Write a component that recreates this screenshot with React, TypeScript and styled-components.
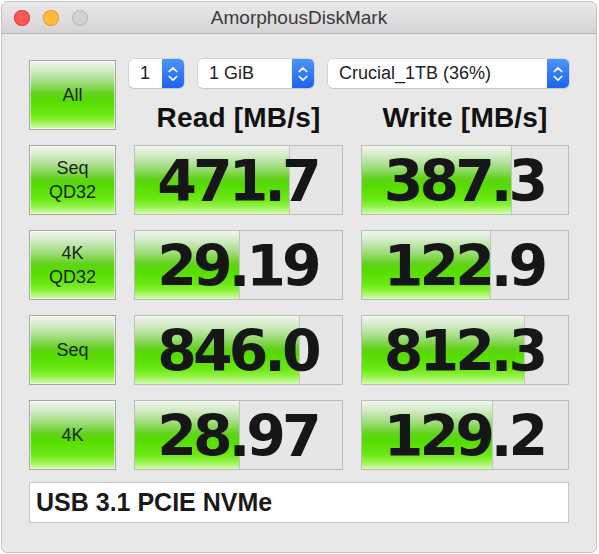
import React from 'react';
import styled, { createGlobalStyle } from 'styled-components';

const GlobalStyle = createGlobalStyle`
  html, body {
    margin: 0;
    padding: 0;
    background: #ffffff;
  }
  body {
    font-family: "Liberation Sans", Arial, sans-serif;
  }
`;

const green = `linear-gradient(to bottom,
  #f1f6ef 0%,
  #d2ebc6 14%,
  #9edc7a 32%,
  #62d21c 48%,
  #55dc00 58%,
  #6ae812 78%,
  #8ef240 88%,
  #d4fcb2 100%)`;

const Window = styled.div`
  margin: 1px 2px 1px 1px;
  width: 596px;
  height: 552px;
  box-sizing: border-box;
  border: 1px solid #c4c4c4;
  border-radius: 6px;
  background: #e8e8e8;
  overflow: hidden;
  display: flex;
  flex-direction: column;
`;

const TitleBar = styled.div`
  height: 31px;
  flex: none;
  display: flex;
  align-items: center;
  position: relative;
  background: linear-gradient(to bottom, #ebe9eb, #d5d3d5);
  border-bottom: 1px solid #b6b6b6;
`;

const Lights = styled.div`
  display: flex;
  gap: 13px;
  padding-left: 12px;
`;

const Light = styled.span<{ $color: string; $edge: string }>`
  width: 16px;
  height: 16px;
  border-radius: 50%;
  background: ${(p) => p.$color};
  box-shadow: inset 0 0 0 1px ${(p) => p.$edge};
`;

const Title = styled.div`
  position: absolute;
  left: 0;
  right: 0;
  text-align: center;
  font-size: 19px;
  color: #3a3a3a;
  pointer-events: none;
`;

const Body = styled.div`
  padding: 26px 0 0 27px;
  display: grid;
  grid-template-columns: 87px 209px 208px;
  column-gap: 18px;
  grid-auto-rows: 70px;
  row-gap: 15px;
`;

const GreenButton = styled.div`
  box-sizing: border-box;
  border: 1px solid #a6a6a6;
  box-shadow: inset 0 0 0 1px rgba(255, 255, 255, 0.55);
  background: ${green};
  display: flex;
  align-items: center;
  justify-content: center;
  text-align: center;
  font-size: 18px;
  line-height: 24px;
  color: #1e1e1e;
`;

const HeadCell = styled.div`
  grid-column: 2 / 4;
  display: flex;
  flex-direction: column;
  justify-content: space-between;
`;

const Selects = styled.div`
  display: flex;
  gap: 14px;
  margin-left: -5px;
  margin-top: -1px;
`;

const Select = styled.div<{ $w: number }>`
  width: ${(p) => p.$w}px;
  height: 29px;
  box-sizing: border-box;
  display: flex;
  background: #ffffff;
  border-radius: 5px;
  box-shadow: 0 0 0 0.5px #c2c2c2, 0 1px 1px rgba(0, 0, 0, 0.12);
  overflow: hidden;
`;

const SelectText = styled.div`
  flex: 1;
  display: flex;
  align-items: center;
  padding-left: 11px;
  font-size: 18px;
  color: #222;
`;

const Stepper = styled.div`
  width: 22px;
  flex: none;
  display: flex;
  align-items: center;
  justify-content: center;
  background: linear-gradient(to bottom, #4b95fa, #1b63f0);
`;

const Headers = styled.div`
  display: grid;
  grid-template-columns: 209px 208px;
  column-gap: 18px;
`;

const Header = styled.div`
  text-align: center;
  font-weight: bold;
  font-size: 28px;
  line-height: 24px;
  color: #111;
  letter-spacing: 0.2px;
`;

const Bar = styled.div`
  position: relative;
  box-sizing: border-box;
  border: 1px solid #bcbcbc;
  background: #e6e6e6;
  display: flex;
  align-items: center;
  justify-content: center;
  overflow: hidden;
`;

const Fill = styled.div`
  position: absolute;
  left: 0;
  top: 0;
  bottom: 0;
  background: ${green};
  border-right: 1px solid #c4c4c4;
`;

const Value = styled.span`
  position: relative;
  font-family: "DejaVu Sans", Verdana, sans-serif;
  font-weight: bold;
  font-size: 57px;
  letter-spacing: -4px;
  line-height: 1;
  color: #161616;
  margin-top: 2px;
  padding-right: 2px;
`;

const Comment = styled.div`
  grid-column: 1 / 4;
  margin-top: -3px;
  height: 41px;
  box-sizing: border-box;
  background: #ffffff;
  border: 1px solid #c6c6c6;
  display: flex;
  align-items: center;
  padding-left: 6px;
  font-weight: bold;
  font-size: 25px;
  color: #1a1a1a;
`;

const Chevrons = () => (
  <svg width="12" height="20" viewBox="0 0 12 20" fill="none" stroke="#fff" strokeWidth="1.7" strokeLinecap="round" strokeLinejoin="round">
    <path d="M2.3 7.5 L6 3.8 L9.7 7.5" />
    <path d="M2.3 12.5 L6 16.2 L9.7 12.5" />
  </svg>
);

type Row = { label: string[]; read: string; readFill: number; write: string; writeFill: number };

const rows: Row[] = [
  { label: ['Seq', 'QD32'], read: '471.7', readFill: 154, write: '387.3', writeFill: 149 },
  { label: ['4K', 'QD32'], read: '29.19', readFill: 104, write: '122.9', writeFill: 128 },
  { label: ['Seq'], read: '846.0', readFill: 164, write: '812.3', writeFill: 162 },
  { label: ['4K'], read: '28.97', readFill: 104, write: '129.2', writeFill: 130 },
];

const SelectBox = ({ w, text }: { w: number; text: string }) => (
  <Select $w={w}>
    <SelectText>{text}</SelectText>
    <Stepper>
      <Chevrons />
    </Stepper>
  </Select>
);

export default function App() {
  return (
    <>
      <GlobalStyle />
      <Window>
        <TitleBar>
          <Lights>
            <Light $color="#fc5753" $edge="#de4a45" />
            <Light $color="#fdbc40" $edge="#dea033" />
            <Light $color="#d0d0d0" $edge="#bcbcbc" />
          </Lights>
          <Title>AmorphousDiskMark</Title>
        </TitleBar>
        <Body>
          <GreenButton>All</GreenButton>
          <HeadCell>
            <Selects>
              <SelectBox w={55} text="1" />
              <SelectBox w={116} text="1 GiB" />
              <SelectBox w={241} text="Crucial_1TB (36%)" />
            </Selects>
            <Headers>
              <Header>Read [MB/s]</Header>
              <Header>Write [MB/s]</Header>
            </Headers>
          </HeadCell>
          {rows.map((r) => (
            <React.Fragment key={r.label.join(' ') + r.read}>
              <GreenButton>
                {r.label.map((l, i) => (
                  <React.Fragment key={l}>
                    {i > 0 && <br />}
                    {l}
                  </React.Fragment>
                ))}
              </GreenButton>
              <Bar>
                <Fill style={{ width: r.readFill }} />
                <Value>{r.read}</Value>
              </Bar>
              <Bar>
                <Fill style={{ width: r.writeFill }} />
                <Value>{r.write}</Value>
              </Bar>
            </React.Fragment>
          ))}
          <Comment>USB 3.1 PCIE NVMe</Comment>
        </Body>
      </Window>
    </>
  );
}
